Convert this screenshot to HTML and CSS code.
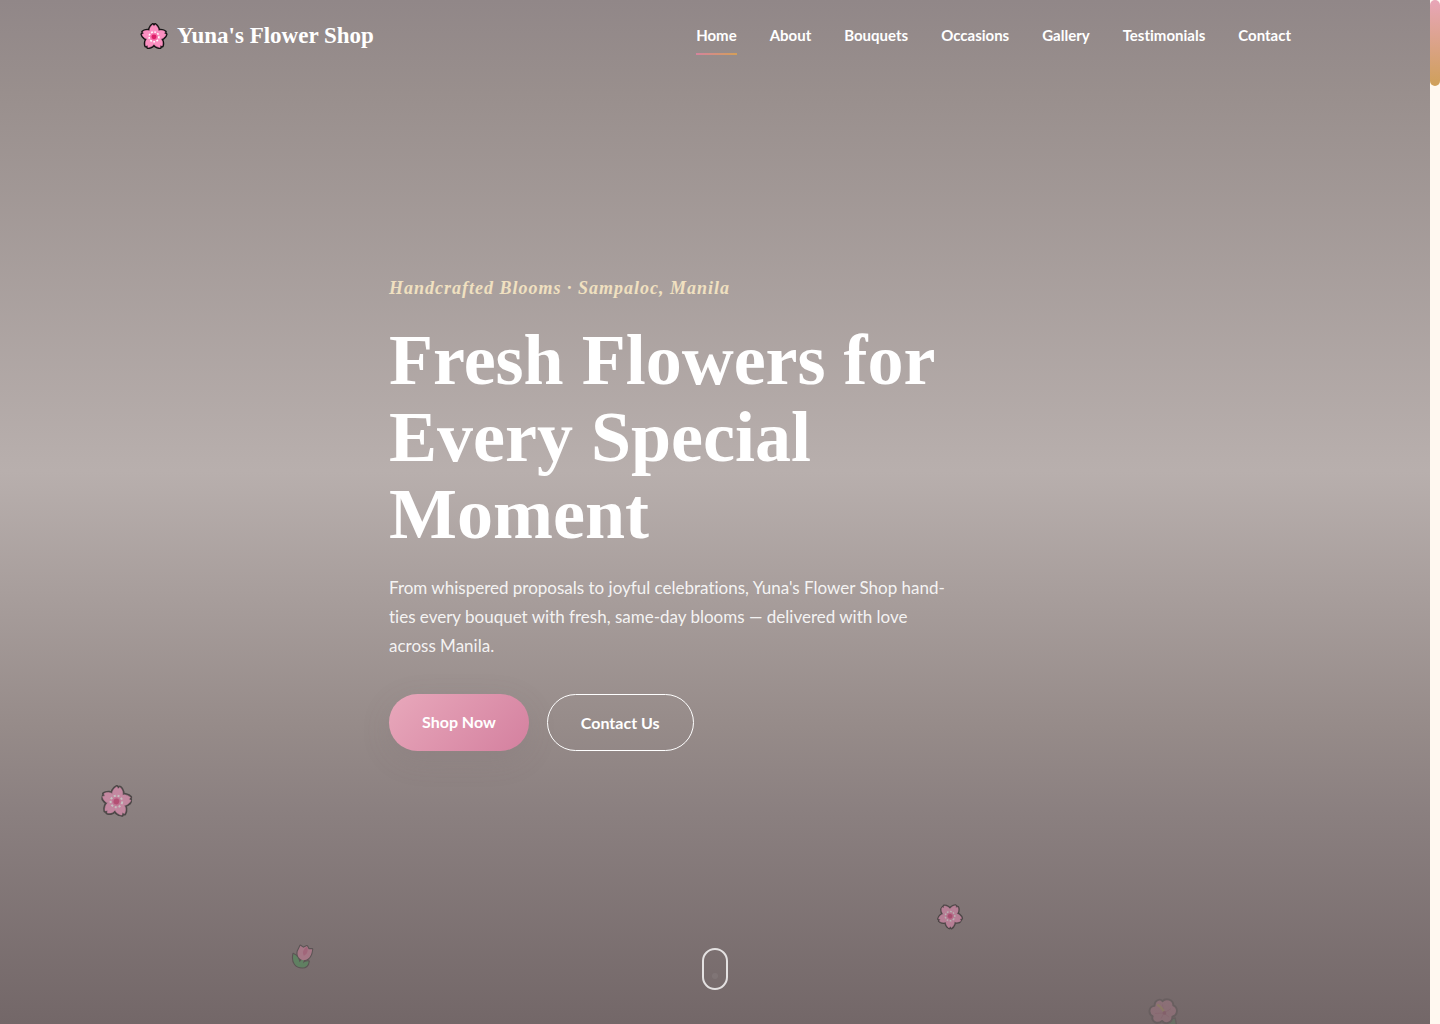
FILE: index.html
```html
<!DOCTYPE html>
<html lang="en">
<head>
    <meta charset="UTF-8">
    <meta name="viewport" content="width=device-width, initial-scale=1.0">
    <title>Yuna's Flower Shop</title>
    <link rel="stylesheet" href="styles.css">
</head>
<body>
    <!-- Shared flower shapes -->
    <svg class="sprite" aria-hidden="true">
        <symbol id="blossom" viewBox="0 0 64 64">
            <g fill="#111" stroke="#111" stroke-width="8" stroke-linejoin="round">
                <path id="petal" d="M32 35C25 29 19 21 22 13C24 8 27 5 29 4L32 8L35 4C37 5 40 8 42 13C45 21 39 29 32 35Z"/>
                <use href="#petal" transform="rotate(72 32 34)"/>
                <use href="#petal" transform="rotate(144 32 34)"/>
                <use href="#petal" transform="rotate(216 32 34)"/>
                <use href="#petal" transform="rotate(288 32 34)"/>
            </g>
            <g fill="#fb8fc0" stroke="#fb8fc0" stroke-width="1">
                <path id="petal-top" d="M32 35C25 29 19 21 22 13C24 8 27 5 29 4L32 8L35 4C37 5 40 8 42 13C45 21 39 29 32 35Z"/>
                <use href="#petal-top" transform="rotate(72 32 34)"/>
                <use href="#petal-top" transform="rotate(144 32 34)"/>
                <use href="#petal-top" transform="rotate(216 32 34)"/>
                <use href="#petal-top" transform="rotate(288 32 34)"/>
            </g>
            <circle cx="32" cy="34" r="12" fill="none" stroke="#fff" stroke-width="4" stroke-dasharray="4 4"/>
            <circle cx="32" cy="34" r="9" fill="#f76aa6"/>
            <circle cx="32" cy="34" r="6" fill="#dc1f68"/>
        </symbol>
        <symbol id="tulip" viewBox="0 0 64 64">
            <g stroke="#222" stroke-width="5" stroke-linejoin="round">
                <path fill="#31a34b" d="M10 25C18 28 23 36 24 44L29 38L34 39L32 47C35 43 40 41 45 42C44 50 39 56 30 56C17 56 6 46 10 25Z"/>
                <path fill="#f888b1" d="M26 6L33 11L41 7L45 14L53 14C52 25 48 36 37 39C26 41 17 31 20 19Z"/>
            </g>
            <path fill="#31a34b" d="M10 25C18 28 23 36 24 44L29 38L34 39L32 47C35 43 40 41 45 42C44 50 39 56 30 56C17 56 6 46 10 25Z"/>
            <path fill="#f888b1" d="M26 6L33 11L41 7L45 14L53 14C52 25 48 36 37 39C26 41 17 31 20 19Z"/>
            <path fill="#e9568d" d="M41 8C45 16 42 26 34 29C29 22 33 14 41 8Z"/>
        </symbol>
        <symbol id="hibiscus" viewBox="0 0 64 64">
            <path fill="#2f9850" stroke="#333" stroke-width="3" d="M36 48L58 45L61 61L42 62Z"/>
            <path fill="#ef8eaf" stroke="#333" stroke-width="4" stroke-linejoin="round" d="M31 9C38 1 54 5 54 18C65 23 64 39 52 42C52 54 38 61 30 51C20 60 6 52 10 41C-1 35 2 20 14 19C13 7 26 2 31 9Z"/>
            <path d="M34 34L31 16M34 34L49 25M34 34L45 43M34 34L28 46M34 34L15 35" stroke="#dc648f" stroke-width="2"/>
            <path d="M35 34Q30 22 21 17" fill="none" stroke="#f5c756" stroke-width="5" stroke-linecap="round"/>
            <circle cx="35" cy="34" r="4" fill="#c83d72"/>
        </symbol>
    </svg>

    <header class="navbar">
        <div class="nav-container">
            <a href="#home" class="logo">
                <svg class="logo-icon" aria-hidden="true"><use href="#blossom"/></svg>
                <span>Yuna's Flower Shop</span>
            </a>
            <nav class="nav-links">
                <a href="#home" class="active">Home</a>
                <a href="#about">About</a>
                <a href="#bouquets">Bouquets</a>
                <a href="#occasions">Occasions</a>
                <a href="#gallery">Gallery</a>
                <a href="#testimonials">Testimonials</a>
                <a href="#contact">Contact</a>
            </nav>
        </div>
    </header>

    <main class="hero" id="home">
        <div class="hero-content">
            <p class="hero-tag">Handcrafted Blooms · Sampaloc, Manila</p>
            <h1>Fresh Flowers for<br>Every Special<br>Moment</h1>
            <p class="hero-text">From whispered proposals to joyful celebrations, Yuna's Flower Shop hand-<br>ties every bouquet with fresh, same-day blooms — delivered with love<br>across Manila.</p>
            <div class="hero-buttons">
                <a href="#bouquets" class="btn btn-primary">Shop Now</a>
                <a href="#contact" class="btn btn-outline">Contact Us</a>
            </div>
        </div>

        <!-- Floating petals -->
        <svg class="petal petal-1" aria-hidden="true"><use href="#blossom"/></svg>
        <svg class="petal petal-2" aria-hidden="true"><use href="#tulip"/></svg>
        <svg class="petal petal-3" aria-hidden="true"><use href="#blossom"/></svg>
        <svg class="petal petal-4" aria-hidden="true"><use href="#hibiscus"/></svg>

        <a href="#about" class="scroll-indicator" aria-label="Scroll down"></a>
    </main>

    <div class="scroll-track" aria-hidden="true"><div class="scroll-thumb"></div></div>
</body>
</html>
```
FILE: styles.css
```css
* {
    margin: 0;
    padding: 0;
    box-sizing: border-box;
}
body {
    font-family: Lato, 'Liberation Sans', sans-serif;
    font-variant-ligatures: none;
    color: white;
    padding-right: 10px;
    background: #fff8f0;
    overflow: hidden;
}
a {
    color: inherit;
    text-decoration: none;
}
.sprite {
    position: absolute;
    width: 0;
    height: 0;
}

/* Navigation */
.navbar {
    position: absolute;
    top: 0;
    left: 0;
    right: 10px;
    z-index: 2;
}
.nav-container {
    max-width: 1200px;
    margin: 0 auto;
    padding: 16px 24px;
    display: flex;
    align-items: center;
    justify-content: space-between;
}
.logo {
    display: flex;
    align-items: center;
    gap: 8px;
    font-family: 'Liberation Serif', serif;
    font-size: 23px;
    font-weight: 700;
    line-height: 40px;
}
.logo-icon {
    width: 30px;
    height: 26px;
}
.nav-links {
    display: flex;
    gap: 33px;
    font-size: 15px;
    font-weight: 700;
}
.nav-links a {
    padding: 7px 0;
    line-height: 22px;
    border-bottom: 2px solid transparent;
}
.nav-links .active {
    border-image: linear-gradient(90deg, #d4839f, #d4a056) 1;
}

/* Hero */
.hero {
    position: relative;
    min-height: 100vh;
    display: flex;
    align-items: center;
    justify-content: center;
    overflow: hidden;
    background: linear-gradient(180deg, #918788 0%, #998f8d 9%, #b8afad 46%, #968b89 71%, #8b8080 79%, #736768 100%);
}
.hero-content {
    width: 100%;
    max-width: 700px;
    padding: 0 24px;
}
.hero-tag {
    font-family: 'Liberation Serif', serif;
    font-size: 18px;
    font-style: italic;
    font-weight: 700;
    line-height: 28px;
    letter-spacing: 1px;
    color: #f0e0c0;
    margin-bottom: 20px;
}
h1 {
    font-family: 'Liberation Serif', serif;
    font-size: 72px;
    font-weight: 700;
    line-height: 77px;
    margin-bottom: 20px;
}
.hero-text {
    font-size: 17px;
    line-height: 29px;
    color: rgba(255, 255, 255, 0.9);
    margin-bottom: 34px;
}
.hero-buttons {
    display: flex;
    gap: 18px;
}
.btn {
    padding: 16px 33px;
    border-radius: 50px;
    font-size: 16px;
    font-weight: 700;
    line-height: 23px;
}
.btn-primary {
    background: linear-gradient(135deg, #e8a8bb, #d4809f);
    box-shadow: 0 8px 30px rgba(120, 100, 110, 0.15);
}
.btn-outline {
    border: 1px solid white;
}

.petal {
    position: absolute;
    width: 28px;
    height: 28px;
}
.petal-1 {
    left: 101px;
    top: 785px;
    width: 31px;
    height: 31px;
    opacity: 0.5;
    transform: rotate(8deg);
}
.petal-2 {
    left: 289px;
    top: 943px;
    opacity: 0.35;
}
.petal-3 {
    left: 938px;
    top: 903px;
    width: 25px;
    height: 25px;
    opacity: 0.45;
    transform: rotate(35deg);
}
.petal-4 {
    left: 1148px;
    top: 997px;
    width: 30px;
    height: 30px;
    opacity: 0.18;
}
.scroll-indicator {
    position: absolute;
    bottom: 34px;
    left: 50%;
    width: 26px;
    height: 42px;
    border: 2px solid rgba(255, 255, 255, 0.8);
    border-radius: 13px;
    transform: translateX(-50%);
}
.scroll-indicator::after {
    content: '';
    position: absolute;
    left: 8px;
    bottom: 9px;
    width: 6px;
    height: 6px;
    border-radius: 50%;
    background: rgba(255, 255, 255, 0.06);
}

/* Scrollbar */
.scroll-track {
    position: fixed;
    top: 0;
    right: 0;
    bottom: 0;
    width: 10px;
    background: #fff8f0;
}
.scroll-thumb {
    height: 86px;
    border-radius: 5px;
    background: linear-gradient(180deg, #e8a5b8, #cfa05a);
}
```
